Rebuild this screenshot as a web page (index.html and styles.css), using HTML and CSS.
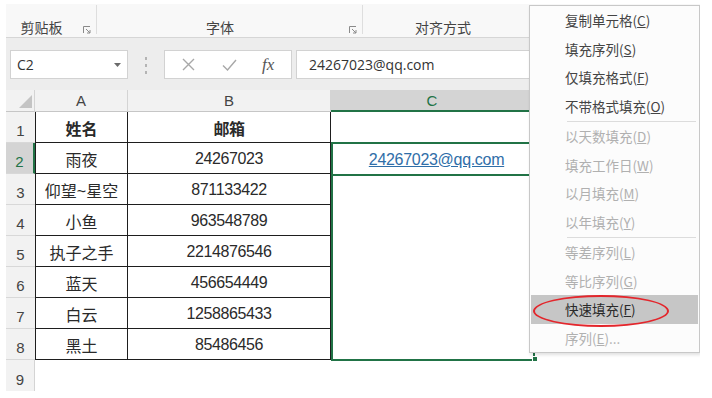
FILE: index.html
```html
<!DOCTYPE html>
<html lang="zh-CN">

<head>
	<meta charset="UTF-8">
	<meta name="viewport" content="width=device-width, initial-scale=1.0">
	<title>快速填充</title>
	<link rel="stylesheet" href="styles.css">
</head>

<body>
	<div class="window">
		<!-- ribbon group labels -->
		<div class="ribbon">
			<div class="group group-clip">
				<span class="group-label">剪贴板</span>
				<svg class="launcher" width="8" height="8" viewBox="0 0 8 8"><path d="M0.5 7V0.5H7" /><path d="M3 3L7 7M7 4V7H4" /></svg>
			</div>
			<div class="group group-font">
				<span class="group-label">字体</span>
				<svg class="launcher" width="8" height="8" viewBox="0 0 8 8"><path d="M0.5 7V0.5H7" /><path d="M3 3L7 7M7 4V7H4" /></svg>
			</div>
			<div class="group group-align">
				<span class="group-label">对齐方式</span>
			</div>
		</div>

		<!-- name box + formula bar -->
		<div class="formula-bar">
			<div class="name-box">
				<span>C2</span>
				<svg width="7" height="4" viewBox="0 0 7 4"><path d="M0 0H7L3.5 4Z" fill="#6b6b6b" /></svg>
			</div>
			<div class="bar-grip">
				<i></i><i></i><i></i>
			</div>
			<div class="fx-box">
				<svg class="fx-icon" width="13" height="13" viewBox="0 0 13 13"><path d="M1 1L12 12M12 1L1 12" /></svg>
				<svg class="fx-icon" width="15" height="12" viewBox="0 0 15 12"><path d="M1 6.5L5.5 11L14 1" /></svg>
				<span class="fx-label">fx</span>
			</div>
			<div class="formula-input">24267023@qq.com</div>
		</div>

		<!-- worksheet -->
		<div class="sheet">
			<div class="corner"><svg width="13" height="13" viewBox="0 0 13 13"><path d="M13 0V13H0Z" fill="#c4c4c4" /></svg></div>
			<div class="col-head">A</div>
			<div class="col-head">B</div>
			<div class="col-head active">C</div>
			<div class="col-head last"></div>

			<div class="row-head">1</div>
			<div class="cell cell-a bold">姓名</div>
			<div class="cell cell-b bold">邮箱</div>
			<div class="blank"></div>
			<div class="blank"></div>

			<div class="row-head active">2</div>
			<div class="cell cell-a">雨夜</div>
			<div class="cell cell-b">24267023</div>
			<div class="blank"><span class="link">24267023@qq.com</span></div>
			<div class="blank"></div>

			<div class="row-head">3</div>
			<div class="cell cell-a">仰望~星空</div>
			<div class="cell cell-b">871133422</div>
			<div class="blank"></div>
			<div class="blank"></div>

			<div class="row-head">4</div>
			<div class="cell cell-a">小鱼</div>
			<div class="cell cell-b">963548789</div>
			<div class="blank"></div>
			<div class="blank"></div>

			<div class="row-head">5</div>
			<div class="cell cell-a">执子之手</div>
			<div class="cell cell-b">2214876546</div>
			<div class="blank"></div>
			<div class="blank"></div>

			<div class="row-head">6</div>
			<div class="cell cell-a">蓝天</div>
			<div class="cell cell-b">456654449</div>
			<div class="blank"></div>
			<div class="blank"></div>

			<div class="row-head">7</div>
			<div class="cell cell-a">白云</div>
			<div class="cell cell-b">1258865433</div>
			<div class="blank"></div>
			<div class="blank"></div>

			<div class="row-head">8</div>
			<div class="cell cell-a">黑土</div>
			<div class="cell cell-b">85486456</div>
			<div class="blank"></div>
			<div class="blank"></div>

			<div class="row-head last-row">9</div>
			<div class="blank"></div>
			<div class="blank"></div>
			<div class="blank"></div>
			<div class="blank"></div>

			<div class="selection"></div>
			<div class="active-cell"></div>
			<div class="fill-handle"></div>
		</div>

		<!-- auto fill options menu -->
		<div class="context-menu">
			<div class="menu-item">复制单元格(<u>C</u>)</div>
			<div class="menu-item">填充序列(<u>S</u>)</div>
			<div class="menu-item">仅填充格式(<u>F</u>)</div>
			<div class="menu-item">不带格式填充(<u>O</u>)</div>
			<div class="menu-sep"></div>
			<div class="menu-item disabled">以天数填充(<u>D</u>)</div>
			<div class="menu-item disabled">填充工作日(<u>W</u>)</div>
			<div class="menu-item disabled">以月填充(<u>M</u>)</div>
			<div class="menu-item disabled">以年填充(<u>Y</u>)</div>
			<div class="menu-sep"></div>
			<div class="menu-item disabled">等差序列(<u>L</u>)</div>
			<div class="menu-item disabled">等比序列(<u>G</u>)</div>
			<div class="menu-item hover marked">快速填充(<u>F</u>)</div>
			<div class="menu-item disabled">序列(<u>E</u>)...</div>
		</div>
	</div>
</body>

</html>
```

FILE: styles.css
```css
* {
	box-sizing: border-box;
}

body {
	margin: 0;
	background: #fff;
	font-family: "Noto Sans CJK SC", sans-serif;
	color: #333;
}

.window {
	position: relative;
	width: 694px;
	height: 390px;
	margin: 4px 0 0 6px;
	overflow: hidden;
	background: #fff;
}

/* ribbon */

.ribbon {
	display: flex;
	height: 34px;
	background: #f8f8f8;
	border-bottom: 1px solid #d6d6d6;
}

.group {
	display: flex;
	align-items: center;
	padding-top: 15px;
	margin: 1px 0 3px;
	border-right: 1px solid #dedede;
	font-size: 14px;
	color: #444;
}

.group-label {
	flex: 1;
	text-align: center;
	line-height: 18px;
}

.launcher {
	margin: 5px 5px 0 6px;
	fill: none;
	stroke: #8a8a8a;
	stroke-width: 1;
}

.group-clip {
	width: 91px;
}

.group-font {
	width: 266px;
}

.group-align {
	width: 180px;
	padding-right: 20px;
	border-right: none;
}

/* formula bar */

.formula-bar {
	display: flex;
	align-items: flex-start;
	height: 52px;
	padding: 12px 0 0 4px;
	background: #ededed;
}

.name-box {
	display: flex;
	align-items: center;
	justify-content: space-between;
	width: 118px;
	height: 29px;
	padding: 0 6px 0 6px;
	background: #fff;
	border: 1px solid #d2d2d2;
	font: 14px "Open Sans", sans-serif;
	color: #333;
}

.bar-grip {
	display: flex;
	flex-direction: column;
	align-items: center;
	gap: 4px;
	width: 36px;
	padding-top: 7px;
}

.bar-grip i {
	width: 2px;
	height: 3px;
	background: #b4b4b4;
}

.fx-box {
	display: flex;
	align-items: center;
	gap: 27px;
	width: 128px;
	height: 29px;
	padding-left: 17px;
	background: #fff;
	border: 1px solid #d2d2d2;
}

.fx-icon {
	fill: none;
	stroke: #a8a8a8;
	stroke-width: 1.4;
}

.fx-label {
	font: italic 17px "Liberation Serif", serif;
	color: #555;
	margin-left: -2px;
}

.formula-input {
	flex: 1;
	height: 29px;
	margin-left: 4px;
	padding-left: 12px;
	background: #fff;
	border: 1px solid #d2d2d2;
	font: 14px/27px "Open Sans", sans-serif;
	color: #333;
}

/* sheet grid */

.sheet {
	position: relative;
	display: grid;
	grid-template-columns: 29px 93px 203px 203px 166px;
	grid-template-rows: 22px repeat(9, 31px);
}

.corner {
	display: flex;
	align-items: flex-end;
	justify-content: flex-end;
	padding: 0 2px 3px 0;
	background: #f2f2f2;
	border-right: 1px solid #d4d4d4;
	border-bottom: 1px solid #c6c6c6;
}

.col-head {
	display: flex;
	align-items: center;
	justify-content: center;
	background: #f2f2f2;
	border-right: 1px solid #d4d4d4;
	border-bottom: 1px solid #c6c6c6;
	font: 15px "Liberation Sans", sans-serif;
	color: #444;
}

.col-head.active {
	background: #d4d4d4;
	color: #217346;
	border-bottom: 2px solid #217346;
}

.row-head {
	display: flex;
	align-items: flex-end;
	justify-content: center;
	padding-bottom: 3px;
	background: #f2f2f2;
	border-bottom: 1px solid #d8d8d8;
	font: 15px "Liberation Sans", sans-serif;
	color: #444;
}

.row-head.active {
	background: #d4d4d4;
	color: #217346;
	border-right: 2px solid #217346;
}

.row-head.last-row {
	border-right: 1px solid #d4d4d4;
	border-bottom: none;
}

.cell {
	display: flex;
	align-items: center;
	justify-content: center;
	padding-top: 2px;
	border-right: 1px solid #1e1e1e;
	border-bottom: 1px solid #1e1e1e;
	font: 16px "Liberation Sans", "Noto Sans CJK SC", sans-serif;
	letter-spacing: -0.4px;
	color: #2a2a2a;
}

.cell-a {
	border-left: 1px solid #1e1e1e;
	letter-spacing: 0;
}

.bold {
	font-weight: bold;
}

.blank {
	display: flex;
	align-items: center;
	justify-content: center;
	padding-top: 2px;
	background: #fff;
}

.link {
	font: 16px "Liberation Sans", sans-serif;
	letter-spacing: -0.3px;
	color: #2f6ea8;
	text-decoration: underline;
	margin-left: 8px;
}

.selection,
.active-cell {
	position: absolute;
	left: 325px;
	top: 52px;
	width: 204px;
	border: 2px solid #217346;
}

.selection {
	height: 219px;
}

.active-cell {
	height: 34px;
}

.fill-handle {
	position: absolute;
	left: 526px;
	top: 266px;
	width: 6px;
	height: 6px;
	background: #217346;
	border: 1px solid #fff;
}

/* auto fill menu */

.context-menu {
	position: absolute;
	left: 523px;
	top: 1px;
	width: 171px;
	padding: 0 1px;
	background: #fcfcfc;
	border: 1px solid #c8c8c8;
	box-shadow: 1px 2px 3px rgba(0, 0, 0, 0.12);
	font-size: 13.5px;
}

.menu-item {
	position: relative;
	display: flex;
	align-items: center;
	height: 28.5px;
	padding-left: 34px;
	color: #444;
	white-space: nowrap;
}

.menu-item.disabled {
	color: #b0b0b0;
}

.menu-item.hover {
	background: #c6c6c6;
	color: #2a2a2a;
}

.menu-item.marked::after {
	content: "";
	position: absolute;
	left: 2px;
	top: 0;
	width: 132px;
	height: 28px;
	border: 2px solid #e3262c;
	border-radius: 50%;
}

.menu-sep {
	height: 1px;
	margin: 0.5px 2px 0.5px 36px;
	background: #dcdcdc;
}
```
